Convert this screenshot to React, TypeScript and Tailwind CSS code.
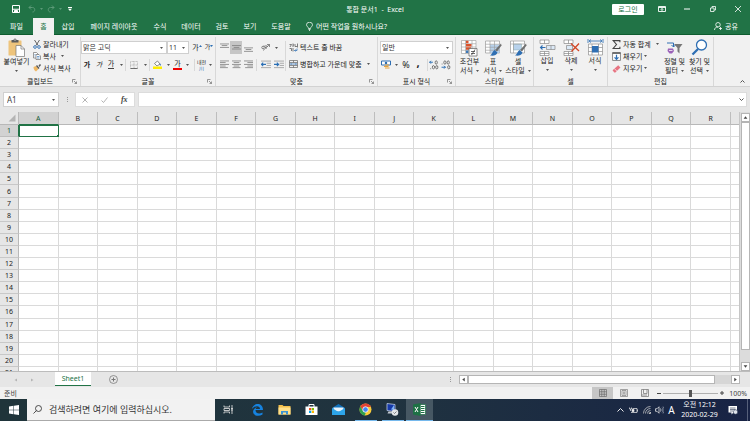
import type { ReactNode } from "react";

const columns = ["A", "B", "C", "D", "E", "F", "G", "H", "I", "J", "K", "L", "M", "N", "O", "P", "Q", "R"];
const rows = Array.from({ length: 21 }, (_, i) => i + 1);

const tabs = [
  { name: "파일", width: "w-[33px]" },
  { name: "홈", width: "w-[21px]" },
  { name: "삽입", width: "w-[28px]" },
  { name: "페이지 레이아웃", width: "w-[64px]" },
  { name: "수식", width: "w-[28px]" },
  { name: "데이터", width: "w-[34px]" },
  { name: "검토", width: "w-[28px]" },
  { name: "보기", width: "w-[28px]" },
  { name: "도움말", width: "w-[34px]" },
];

function Caret({ className = "text-[#555]" }: { className?: string }) {
  return (
    <svg viewBox="0 0 6 4" className={`w-[3px] h-[2px] shrink-0 ${className}`}>
      <path d="M0 0h6L3 4z" fill="currentColor" />
    </svg>
  );
}

function Group({ label, width, launcher, children }: { label: string; width: string; launcher?: boolean; children: ReactNode }) {
  return (
    <section aria-label={label} className={`${width} shrink-0 flex flex-col pt-0.5`}>
      <div className="flex-1 flex flex-col border-r border-[#d8d8d8]">
        <div className="flex-1">{children}</div>
        <div className="flex items-center h-[9px]">
          <span className="w-2" />
          <span className="flex-1 text-center">{label}</span>
          <span className="w-2">
            {launcher && (
              <button aria-label={`${label} 설정`} className="block">
                <svg viewBox="0 0 10 10" className="size-[5px]" fill="none" stroke="#777" strokeWidth="1.5">
                  <path d="M1 7V1h6M4 4l5 5M9 5v4H5" />
                </svg>
              </button>
            )}
          </span>
        </div>
      </div>
    </section>
  );
}

function Tool({ label, width = "w-3", active, children }: { label: string; width?: string; active?: boolean; children: ReactNode }) {
  return (
    <button
      aria-label={label}
      className={`${width} h-[13px] shrink-0 flex items-center justify-center ${active ? "bg-[#c6c6c6]" : ""}`}
    >
      {children}
    </button>
  );
}

function Drop({ label, width = "w-2" }: { label: string; width?: string }) {
  return (
    <button aria-label={`${label} 옵션`} className={`${width} h-[13px] shrink-0 flex items-center justify-center`}>
      <Caret />
    </button>
  );
}

function Sep() {
  return <span className="w-px h-3 bg-[#d8d8d8] shrink-0" />;
}

function Combo({ label, value, width }: { label: string; value: string; width: string }) {
  return (
    <div className={`relative ${width} shrink-0`}>
      <select
        aria-label={label}
        defaultValue={value}
        className="block w-full h-[13px] appearance-none bg-white ring-1 ring-inset ring-[#cfcfcf] pl-[2px] pr-2 leading-[13px] text-[#333] outline-none"
      >
        <option>{value}</option>
      </select>
      <span className="absolute right-1 inset-y-0 flex items-center pointer-events-none">
        <Caret />
      </span>
    </div>
  );
}

function BigButton({ lines, width, caretBelow, children }: { lines: string[]; width: string; caretBelow?: boolean; children: ReactNode }) {
  const last = lines.length - 1;
  return (
    <button className={`${width} shrink-0 flex flex-col items-center`}>
      {children}
      {lines.map((line, i) => (
        <span key={line} className="flex items-center gap-[3px] whitespace-nowrap">
          {line}
          {i === last && !caretBelow && <Caret />}
        </span>
      ))}
      {caretBelow && (
        <span className="h-[9px] flex items-center">
          <Caret />
        </span>
      )}
    </button>
  );
}

function RowButton({ text, caret, gap = "gap-[5px]", children }: { text: string; caret?: boolean; gap?: string; children: ReactNode }) {
  return (
    <button className={`flex items-center h-3 ${gap} whitespace-nowrap`}>
      <span className="flex items-center gap-[2px]">
        {children}
        {text}
      </span>
      {caret && <Caret />}
    </button>
  );
}

// horizontal text lines, given as [x, width] pairs
function Lines({ rows, top = 2 }: { rows: number[][]; top?: number }) {
  return (
    <svg viewBox="0 0 16 16" className="size-[9px]">
      {rows.map(([x, w], i) => (
        <rect key={i} x={x} y={top + i * 3} width={w} height="1.4" fill="#7d7d7d" />
      ))}
    </svg>
  );
}

function IndentIcon({ flip }: { flip?: boolean }) {
  return (
    <svg viewBox="0 0 16 14" className="w-[10px] h-[9px]">
      <path d="M0 1.5h16M9 5h7M9 8.5h7M0 12h16" stroke="#9a9a9a" strokeWidth="1.3" />
      <path d={flip ? "M0 6.8h7M4.5 4l3 2.8-3 2.8" : "M1 6.8h7M3.5 4l-3 2.8 3 2.8"} stroke="#2b6fb5" strokeWidth="1.8" fill="none" />
    </svg>
  );
}

function DecimalIcon({ up }: { up?: boolean }) {
  return (
    <svg viewBox="0 0 18 18" className="size-[10px]" fill="none">
      <path d={up ? "M7 4H1M3.5 1.5L1 4l2.5 2.5" : "M1 13h7M5.5 10.5L8 13l-2.5 2.5"} stroke="#2b6fb5" strokeWidth="1.8" />
      <g stroke="#555" strokeWidth="1.4">
        <ellipse cx="13" cy="4.5" rx="2" ry="3" />
        <ellipse cx="14" cy="13" rx="2" ry="3" />
        {up ? <ellipse cx="8" cy="13" rx="2" ry="3" /> : <ellipse cx="7" cy="4.5" rx="2" ry="3" />}
        <path d={up ? "M3 15v1.5" : "M2 6.5V8"} />
      </g>
    </svg>
  );
}

function PasteIcon() {
  return (
    <svg viewBox="0 0 34 38" className="w-[17px] h-[19px]">
      <rect x="1" y="5" width="26" height="30" rx="1" fill="#eec47c" />
      <path d="M7 9V4h4a3 3 0 016 0h4v5z" fill="#5d5d5d" />
      <circle cx="14" cy="4" r="1.3" fill="#f1f1f1" />
      <path d="M16 15h10l7 7v15H16z" fill="#fff" stroke="#777" strokeWidth="1.4" />
      <path d="M26 15v7h7" fill="none" stroke="#777" strokeWidth="1.4" />
    </svg>
  );
}

function CondIcon() {
  return (
    <svg viewBox="0 0 34 36" className="w-[17px] h-[18px]">
      <path d="M1 3h29v26H1zM1 9.5h29M1 16h29M1 22.5h29M9 3v26M22 3v26" fill="#fff" stroke="#999" strokeWidth="1.2" />
      <path d="M10 3.5h5v5h-5zM10 16.5h10v5H10z" fill="#d9532c" />
      <path d="M10 10h11v5H10z" fill="#d9532c" />
      <path d="M10 23h5v5h-5z" fill="#3c78b8" />
      <path d="M16 19h16v15H16z" fill="#fff" stroke="#666" strokeWidth="1.5" />
      <path d="M20 29h8M20 25h8M21 32l7-11" stroke="#444" strokeWidth="1.6" />
    </svg>
  );
}

function StyleIcon({ cell }: { cell?: boolean }) {
  return (
    <svg viewBox="0 0 34 36" className="w-[17px] h-[18px]">
      <path d="M1 4h28v24H1z" fill="#fff" stroke="#999" strokeWidth="1.4" />
      {cell ? (
        <path d="M7 10h16v12H7z" fill="#b8d2ec" stroke="#8aa" />
      ) : (
        <path d="M10 11h19v17H10z" fill="#b8d2ec" />
      )}
      <path d={cell ? "M1 10h28M7 4v24" : "M1 10.5h28M1 16.5h28M1 22.5h28M10 4v24M19 4v24"} stroke="#999" strokeWidth="1.2" fill="none" />
      <path d="M32 9l1 4-9 12-4-3z" fill="#707070" />
      <path d="M19 22l6 5c-2 6-8 7-15 6 4-2 4-7 9-11z" fill="#2f6fb3" />
    </svg>
  );
}

function CellsIcon({ kind }: { kind: "insert" | "delete" | "format" }) {
  return (
    <svg viewBox="0 0 34 34" className="w-[17px] h-[17px]" fill="none">
      {kind === "format" ? (
        <>
          <path d="M3 10h28v22H3zM3 17h28M3 25h28M10 10v22M23 10v22" fill="#fff" stroke="#888" strokeWidth="1.3" />
          <path d="M10 14h13v13H10z" fill="#2f6fb3" />
          <path d="M4 4h26M8 1L4 4l4 3M26 1l4 3-4 3M2 0v8M32 0v8" stroke="#2f6fb3" strokeWidth="1.6" />
        </>
      ) : (
        <>
          <path d="M2 2h18v7H2zM11 2v7M2 25h18v8H2zM11 25v8M2 29h18" fill="#fff" stroke="#888" strokeWidth="1.4" />
          {kind === "insert" ? (
            <>
              <path d="M15 13h17v8H15zM24 13v8" fill="#dce9f6" stroke="#888" strokeWidth="1.4" />
              <path d="M13 17H3M7 13l-4 4 4 4" stroke="#2f6fb3" strokeWidth="2.2" />
            </>
          ) : (
            <>
              <path d="M7 13h12v8H7z" fill="#dce9f6" stroke="#888" strokeWidth="1.4" />
              <path d="M16 9l16 15M32 9L17 25" stroke="#d24726" strokeWidth="2.6" />
            </>
          )}
        </>
      )}
    </svg>
  );
}

function TitleBar() {
  return (
    <header className="h-[18px] shrink-0 flex items-center text-white">
      <div className="flex-1 flex items-center">
        <button aria-label="저장" className="ml-3">
          <svg viewBox="0 0 16 16" className="size-2" fill="none" stroke="#fff" strokeWidth="2">
            <path d="M1 1h14v14H1zM1 8.5h14" />
            <path d="M5 11h6v4H5z" fill="#fff" />
          </svg>
        </button>
        <button aria-label="실행 취소" className="ml-2 flex items-center gap-1 text-[#5c9a78]">
          <svg viewBox="0 0 16 16" className="size-2" fill="none" stroke="currentColor" strokeWidth="2">
            <path d="M6 1L2 5l4 4M2 5h7c6 0 6 9 0 9" />
          </svg>
          <Caret className="text-[#5c9a78]" />
        </button>
        <button aria-label="다시 실행" className="ml-1 flex items-center gap-1 text-[#5c9a78]">
          <svg viewBox="0 0 16 16" className="size-2" fill="none" stroke="currentColor" strokeWidth="2">
            <path d="M10 1l4 4-4 4M14 5H7C1 5 1 14 7 14" />
          </svg>
          <Caret className="text-[#5c9a78]" />
        </button>
        <button aria-label="빠른 실행 도구" className="ml-1.5">
          <svg viewBox="0 0 8 8" className="size-1" fill="#fff">
            <path d="M0 0h8v2H0zM0 3.5h8L4 8z" />
          </svg>
        </button>
      </div>
      <h1 className="whitespace-pre">통합 문서1  -  Excel</h1>
      <div className="flex-1 flex items-center justify-end">
        <button className="w-8 h-[11px] bg-white text-[#217346] rounded-[1px] mr-[14px]">로그인</button>
        <button aria-label="리본 표시" className="mr-[18px]">
          <svg viewBox="0 0 16 12" className="w-2 h-1.5" fill="none" stroke="#fff" strokeWidth="1.8">
            <path d="M1 1h14v10H1zM1 3h14M8 10V5M5.5 7.5L8 5l2.5 2.5" />
          </svg>
        </button>
        <button aria-label="최소화" className="mr-5">
          <svg viewBox="0 0 12 12" className="size-1.5" stroke="#fff" strokeWidth="2">
            <path d="M0 6h12" />
          </svg>
        </button>
        <button aria-label="이전 크기로" className="mr-[19px]">
          <svg viewBox="0 0 12 12" className="size-1.5" fill="none" stroke="#fff" strokeWidth="1.6">
            <path d="M1 4h7v7H1zM4 4V1h7v7H8" />
          </svg>
        </button>
        <button aria-label="닫기" className="mr-[9px]">
          <svg viewBox="0 0 12 12" className="size-1.5" stroke="#fff" strokeWidth="1.6">
            <path d="M0 0l12 12M12 0L0 12" />
          </svg>
        </button>
      </div>
    </header>
  );
}

function RibbonTabs() {
  return (
    <nav className="h-[17px] shrink-0 flex items-stretch text-white border-b border-[#0e5c2f]">
      {tabs.map((tab) => (
        <button
          key={tab.name}
          className={`${tab.width} shrink-0 whitespace-nowrap text-center ${tab.name === "홈" ? "bg-[#f1f1f1] text-[#217346] -mb-px" : ""}`}
        >
          {tab.name}
        </button>
      ))}
      <button className="ml-2 flex items-center gap-[3px] whitespace-nowrap">
        <svg viewBox="0 0 14 18" className="w-[7px] h-[9px]" fill="none" stroke="#fff" strokeWidth="1.5">
          <path d="M5 13c0-3-4-4-4-7.5a6 5 0 0112 0C13 9 9 10 9 13zM5 15h4M6 17h2" />
        </svg>
        어떤 작업을 원하시나요?
      </button>
      <button className="ml-auto mr-3 flex items-center gap-[3px]">
        <svg viewBox="0 0 16 16" className="size-2" fill="none" stroke="#fff" strokeWidth="1.6">
          <circle cx="8" cy="5.5" r="4.5" />
          <path d="M1 16c0-4 3-6 7-6M13 10v6M10 13h6" />
        </svg>
        공유
      </button>
    </nav>
  );
}

function Ribbon() {
  return (
    <div className="h-[51px] shrink-0 flex bg-[#f1f1f1] text-[#222]">
      <Group label="클립보드" width="w-[81px]" launcher>
        <div className="flex pt-px">
          <BigButton lines={["붙여넣기"]} width="w-[33px]" caretBelow>
            <PasteIcon />
          </BigButton>
          <div className="flex flex-col">
            <RowButton text="잘라내기">
              <svg viewBox="0 0 16 18" className="w-2 h-[9px]" fill="none">
                <path d="M3 0l7 11M13 0L6 11" stroke="#555" strokeWidth="1.8" />
                <circle cx="4" cy="14" r="2.7" stroke="#2f6fb3" strokeWidth="1.8" />
                <circle cx="12" cy="14" r="2.7" stroke="#2f6fb3" strokeWidth="1.8" />
              </svg>
            </RowButton>
            <RowButton text="복사" caret>
              <svg viewBox="0 0 16 16" className="size-2" fill="#fff" stroke="#666" strokeWidth="1.3">
                <path d="M1 1h6l3 3v8H1z" />
                <path d="M6 5h6l3 3v7H6z" />
                <path d="M8 9h5M8 12h5M3 5h2M3 8h2" stroke="#2f6fb3" />
              </svg>
            </RowButton>
            <RowButton text="서식 복사">
              <svg viewBox="0 0 16 16" className="size-2">
                <path d="M1 6l5-2 5 6-5 5c-3-2-5-5-5-9z" fill="#eeb765" />
                <path d="M6 4l2-2 5 6-2 2zM11 3l3-3 2 2-3 4z" fill="#555" />
              </svg>
            </RowButton>
          </div>
        </div>
      </Group>

      <Group label="글꼴" width="w-[135px]" launcher>
        <div className="flex items-center pt-1">
          <Combo label="글꼴" value="맑은 고딕" width="w-[86px]" />
          <Combo label="글꼴 크기" value="11" width="w-[22px]" />
          <span className="w-[2px]" />
          <Tool label="글꼴 크게" width="w-3">
            <span>가</span>
            <svg viewBox="0 0 6 4" className="w-[3px] h-[2px] mb-1"><path d="M0 4h6L3 0z" fill="#2f6fb3" /></svg>
          </Tool>
          <Tool label="글꼴 작게" width="w-3">
            <span className="text-[6px]">가</span>
            <svg viewBox="0 0 6 4" className="w-[3px] h-[2px] mb-1"><path d="M0 0h6L3 4z" fill="#2f6fb3" /></svg>
          </Tool>
        </div>
        <div className="flex items-center pt-1">
          <Tool label="굵게"><b>가</b></Tool>
          <Tool label="기울임꼴"><i>가</i></Tool>
          <Tool label="밑줄"><span className="border-b border-[#444] leading-2">가</span></Tool>
          <Drop label="밑줄" />
          <Sep />
          <Tool label="테두리" width="w-[15px]">
            <svg viewBox="0 0 16 16" className="size-2" fill="none" stroke="#999" strokeWidth="1.4">
              <path d="M1 1h14v14H1zM8 1v14M1 8h14" strokeDasharray="1.5 1.3" />
              <path d="M1 15h14" stroke="#444" />
            </svg>
          </Tool>
          <Drop label="테두리" />
          <Sep />
          <Tool label="채우기 색" width="w-[14px]">
            <svg viewBox="0 0 18 18" className="size-[9px]">
              <path d="M3 7l6-5 5 6-6 4z" fill="#fff" stroke="#666" strokeWidth="1.5" />
              <path d="M14 7c2 2 3 4 1 4s-2-2-1-4z" fill="#2f6fb3" />
              <path d="M0 13h18v5H0z" fill="#ffed00" />
            </svg>
          </Tool>
          <Drop label="채우기 색" />
          <Tool label="글꼴 색" width="w-[11px]">
            <span className="w-[9px] border-b-2 border-[#f00000] leading-2 text-center">가</span>
          </Tool>
          <Drop label="글꼴 색" />
          <span className="w-[3px]" />
          <Sep />
          <Tool label="윗주" width="w-[13px]">
            <span className="text-[5px] leading-[6px]">
              내천
              <br />
              <span className="text-[#2f6fb3]">川</span>
            </span>
          </Tool>
          <Drop label="윗주" width="w-[5px]" />
        </div>
      </Group>

      <Group label="맞춤" width="w-[162px]" launcher>
        <div className="flex pt-1 pl-px">
          <div className="flex flex-col gap-1 pl-px">
            <div className="flex items-center">
              <Tool label="위쪽 맞춤"><Lines rows={[[0, 16], [3, 10], [0, 16]]} top={1} /></Tool>
              <Tool label="가운데 맞춤" active><Lines rows={[[0, 16], [3, 10], [0, 16]]} top={4} /></Tool>
              <Tool label="아래쪽 맞춤"><Lines rows={[[0, 16], [3, 10], [0, 16]]} top={8} /></Tool>
              <span className="w-[5px]" />
              <Tool label="방향" width="w-[13px]">
                <svg viewBox="0 0 20 18" className="w-[10px] h-[9px]" fill="none" stroke="#666" strokeWidth="1.5">
                  <path d="M4 15L17 3M17 8V3h-5" />
                  <circle cx="4" cy="9" r="2.5" />
                  <path d="M6 5l5 6M9 4l4 4" stroke="#444" />
                </svg>
              </Tool>
              <Drop label="방향" />
            </div>
            <div className="flex items-center">
              <Tool label="왼쪽"><Lines rows={[[0, 16], [0, 10], [0, 16], [0, 10], [0, 14]]} top={1} /></Tool>
              <Tool label="가운데"><Lines rows={[[0, 16], [3, 10], [0, 16], [3, 10], [1, 14]]} top={1} /></Tool>
              <Tool label="오른쪽"><Lines rows={[[0, 16], [6, 10], [0, 16], [6, 10], [2, 14]]} top={1} /></Tool>
              <span className="w-0.5" />
              <Sep />
              <span className="w-0.5" />
              <Tool label="내어쓰기" width="w-[13px]"><IndentIcon /></Tool>
              <Tool label="들여쓰기" width="w-[13px]"><IndentIcon flip /></Tool>
            </div>
          </div>
          <span className="w-px bg-[#d8d8d8]" />
          <div className="flex flex-col gap-[5px] pl-[3px]">
            <RowButton text="텍스트 줄 바꿈">
              <svg viewBox="0 0 18 18" className="size-[9px]" fill="none" stroke="#555" strokeWidth="1.5">
                <path d="M1 3h4l-3 5M8 1v7M8 4h2M12 2v5h4M17 1v8M1 11h4v5M8 10v7" />
                <path d="M16 11v4h-5M13 13l-2 2 2 2" stroke="#2f6fb3" />
              </svg>
            </RowButton>
            <RowButton text="병합하고 가운데 맞춤" caret>
              <svg viewBox="0 0 18 16" className="w-[9px] h-2" fill="none" stroke="#666" strokeWidth="1.4">
                <path d="M1 1h16v14H1zM1 5h16M1 11h16M9 1v4M9 11v4" />
                <path d="M3 8h12M5 6L3 8l2 2M13 6l2 2-2 2" stroke="#2f6fb3" />
              </svg>
            </RowButton>
          </div>
        </div>
      </Group>

      <Group label="표시 형식" width="w-[78px]" launcher>
        <div className="flex pt-1 pl-[2px]">
          <Combo label="표시 형식" value="일반" width="w-[73px]" />
        </div>
        <div className="flex items-center pt-1 pl-[2px]">
          <Tool label="회계 표시 형식">
            <svg viewBox="0 0 20 18" className="w-[10px] h-[9px]">
              <path d="M1 2h18v8H1z" fill="#fff" stroke="#2f6fb3" strokeWidth="2" />
              <circle cx="10" cy="6" r="2.5" fill="#2f6fb3" />
              <path d="M8 9h8v2H8zM6 12h9v2H6zM8 15h9v2H8z" fill="#e8a33d" />
            </svg>
          </Tool>
          <Drop label="회계" />
          <Tool label="백분율"><span className="text-[9px]">%</span></Tool>
          <Tool label="쉼표"><b className="text-[11px] leading-2 pb-1">,</b></Tool>
          <span className="w-[3px]" />
          <Sep />
          <Tool label="자릿수 늘림"><DecimalIcon up /></Tool>
          <Tool label="자릿수 줄임"><DecimalIcon /></Tool>
        </div>
      </Group>

      <Group label="스타일" width="w-[78px]">
        <div className="flex pt-[2px] pl-px">
          <BigButton lines={["조건부", "서식"]} width="w-[25px]"><CondIcon /></BigButton>
          <BigButton lines={["표", "서식"]} width="w-[22px]"><StyleIcon /></BigButton>
          <BigButton lines={["셀", "스타일"]} width="w-[28px]"><StyleIcon cell /></BigButton>
        </div>
      </Group>

      <Group label="셀" width="w-[74px]">
        <div className="flex pt-[2px] pl-px">
          <BigButton lines={["삽입"]} width="w-6" caretBelow><CellsIcon kind="insert" /></BigButton>
          <BigButton lines={["삭제"]} width="w-6" caretBelow><CellsIcon kind="delete" /></BigButton>
          <BigButton lines={["서식"]} width="w-6" caretBelow><CellsIcon kind="format" /></BigButton>
        </div>
      </Group>

      <Group label="편집" width="w-[106px]">
        <div className="flex pt-px pl-1">
          <div className="w-[50px] flex flex-col">
            <RowButton text="자동 합계" caret>
              <svg viewBox="0 0 16 16" className="size-[9px]" fill="none" stroke="#444" strokeWidth="2">
                <path d="M14 4V1H2l6 7-6 7h12v-3" />
              </svg>
            </RowButton>
            <RowButton text="채우기" caret gap="gap-[2px]">
              <svg viewBox="0 0 16 16" className="size-[9px]" fill="none">
                <path d="M1 1h14v14H1z" fill="#fff" stroke="#777" strokeWidth="1.5" />
                <path d="M1 2h14" stroke="#555" strokeWidth="2.5" />
                <path d="M8 5v8M4.5 9.5L8 13l3.5-3.5" stroke="#2f6fb3" strokeWidth="2.2" />
              </svg>
            </RowButton>
            <RowButton text="지우기" caret gap="gap-[2px]">
              <svg viewBox="0 0 16 16" className="size-[9px]">
                <path d="M1 11L11 2l4 4-9 9H4z" fill="#e77482" />
                <path d="M4 8l5 5" stroke="#fff" strokeWidth="1.2" />
              </svg>
            </RowButton>
          </div>
          <div className="flex pt-px">
            <BigButton lines={["정렬 및", "필터"]} width="w-[25px]">
              <svg viewBox="0 0 34 36" className="w-[17px] h-[18px]" fill="none">
                <path d="M2 8h13v8M11 12l4 4 4-4" stroke="#2f6fb3" strokeWidth="2" />
                <path d="M16 10h17l-6 8v11l-4-4v-7z" fill="#777" />
                <path d="M4 19h10l2 5-4 5H7l-4-5z" fill="#9b62b8" />
                <path d="M6 23h7" stroke="#fff" strokeWidth="1.5" />
              </svg>
            </BigButton>
            <BigButton lines={["찾기 및", "선택"]} width="w-[25px]">
              <svg viewBox="0 0 34 36" className="w-[17px] h-[18px]" fill="none">
                <circle cx="21" cy="12" r="10" fill="#fff" stroke="#2f6fb3" strokeWidth="2.6" />
                <path d="M14 20L3 31" stroke="#2f6fb3" strokeWidth="4.5" />
              </svg>
            </BigButton>
          </div>
        </div>
      </Group>
      <button aria-label="리본 축소" className="ml-auto self-end mr-[5px] mb-[3px]">
        <svg viewBox="0 0 10 6" className="w-[5px] h-[3px]" fill="none" stroke="#555" strokeWidth="2">
          <path d="M1 5l4-4 4 4" />
        </svg>
      </button>
    </div>
  );
}

function FormulaBar() {
  return (
    <div className="h-[26px] shrink-0 flex items-center bg-[#e6e6e6] border-t border-[#d2d2d2] px-[3px] text-[#444]">
      <div className="relative w-14 shrink-0">
        <input aria-label="이름 상자" defaultValue="A1" className="block w-full h-[15px] bg-white border border-[#d0d0d0] pl-[3px] text-[8px] outline-none" />
        <span className="absolute right-1 inset-y-0 flex items-center"><Caret /></span>
      </div>
      <span className="w-4 flex flex-col items-center gap-px">
        <i className="size-px bg-[#999]" />
        <i className="size-px bg-[#999]" />
        <i className="size-px bg-[#999]" />
      </span>
      <div className="w-[60px] h-[15px] shrink-0 flex items-center justify-around bg-white border border-[#dcdcdc]">
        <button aria-label="취소">
          <svg viewBox="0 0 12 12" className="size-1.5" stroke="#aaa" strokeWidth="1.8"><path d="M1 1l10 10M11 1L1 11" /></svg>
        </button>
        <button aria-label="입력">
          <svg viewBox="0 0 14 12" className="w-[7px] h-[6px]" fill="none" stroke="#aaa" strokeWidth="1.8"><path d="M1 7l4 4 8-10" /></svg>
        </button>
        <button aria-label="함수 삽입" className="font-['Liberation_Serif',serif] italic font-bold text-[8px]">fx</button>
      </div>
      <div className="relative flex-1 ml-[3px]">
        <input aria-label="수식 입력줄" className="block w-full h-[15px] bg-white border border-[#dcdcdc] px-1 outline-none" />
        <svg viewBox="0 0 10 6" className="absolute right-[3px] top-[6px] w-[5px] h-[3px]" fill="none" stroke="#555" strokeWidth="2">
          <path d="M1 1l4 4 4-4" />
        </svg>
      </div>
    </div>
  );
}

function Arrow({ dir }: { dir: "up" | "down" | "left" | "right" }) {
  const paths = { up: "M1 6h6L4 2z", down: "M1 2h6L4 6z", left: "M6 1v6L2 4z", right: "M2 1v6l4-3z" };
  return (
    <button aria-label={dir} className="size-[9px] shrink-0 bg-white border border-[#b5b5b5] flex items-center justify-center">
      <svg viewBox="0 0 8 8" className="size-[5px]"><path d={paths[dir]} fill="#444" /></svg>
    </button>
  );
}

function Sheet() {
  return (
    <main className="flex-1 min-h-0 flex bg-[#e6e6e6]">
      <div className="flex-1 min-w-0 overflow-hidden">
        <table className="w-full h-[267px] table-fixed border-separate border-spacing-0 bg-white text-center text-[#222]">
          <colgroup>
            <col className="w-[19px]" />
            {columns.map((c) => <col key={c} />)}
            <col className="w-2" />
          </colgroup>
          <thead>
            <tr className="h-[13px] bg-[#e6e6e6]">
              <th className="p-0 border-r border-b border-[#b8b8b8]">
                <svg viewBox="0 0 16 16" className="size-2 ml-auto mr-0.5"><path d="M15 1v14H1z" fill="#b4b4b4" /></svg>
              </th>
              {columns.map((c) => (
                <th
                  key={c}
                  className={`p-0 font-normal border-r border-r-[#bdbdbd] border-b ${c === "A" ? "bg-[#d2d2d2] border-b-[#217346] text-[#185c37]" : "border-b-[#b8b8b8]"}`}
                >
                  {c}
                </th>
              ))}
              <th className="p-0 border-b border-[#b8b8b8]" />
            </tr>
          </thead>
          <tbody>
            {rows.map((r) => (
              <tr key={r}>
                <th
                  className={`p-0 font-normal border-b border-r ${r === 1 ? "bg-[#d2d2d2] border-b-[#bdbdbd] border-r-[#217346] text-[#185c37]" : "bg-[#e6e6e6] border-b-[#c8c8c8] border-r-[#b8b8b8]"}`}
                >
                  {r}
                </th>
                {columns.map((c) =>
                  c === "A" && r === 1 ? (
                    <td key={c} className="relative p-0 border-b border-r border-[#217346] outline outline-[#217346] -outline-offset-1">
                      <span className="absolute -right-px -bottom-px size-[2px] bg-[#217346]" />
                    </td>
                  ) : (
                    <td key={c} className="p-0 border-b border-r border-[#dadada]" />
                  ),
                )}
                <td className="p-0 border-b border-[#dadada]" />
              </tr>
            ))}
          </tbody>
        </table>
      </div>
      <div className="w-[11px] shrink-0 flex flex-col items-center border-l border-[#c6c6c6] bg-[#dcdcdc] pt-px">
        <Arrow dir="up" />
        <div className="w-[9px] flex-1 bg-white border border-[#b5b5b5] mb-3" />
        <Arrow dir="down" />
      </div>
    </main>
  );
}

function SheetTabs() {
  return (
    <div className="h-4 shrink-0 flex bg-[#e6e6e6] border-t border-[#bcbcbc] text-[#bbb]">
      <div className="w-[55px] shrink-0 flex items-center pl-[14px] gap-3">
        <button aria-label="이전 시트"><svg viewBox="0 0 8 8" className="size-1"><path d="M6 1v6L1 4z" fill="#b5b5b5" /></svg></button>
        <button aria-label="다음 시트"><svg viewBox="0 0 8 8" className="size-1"><path d="M2 1v6l5-3z" fill="#b5b5b5" /></svg></button>
      </div>
      <button className="w-9 h-[14px] shrink-0 bg-white border-b border-[#217346] text-[#217346]">Sheet1</button>
      <button aria-label="새 시트" className="ml-[18px]">
        <svg viewBox="0 0 18 18" className="size-[9px]" fill="none" stroke="#777" strokeWidth="1.5">
          <circle cx="9" cy="9" r="8" />
          <path d="M9 5v8M5 9h8" strokeWidth="2" />
        </svg>
      </button>
      <div className="ml-auto w-[300px] flex items-center pr-2.5">
        <span className="w-[9px] flex flex-col gap-px">
          <i className="size-px bg-[#999]" />
          <i className="size-px bg-[#999]" />
          <i className="size-px bg-[#999]" />
        </span>
        <Arrow dir="left" />
        <div className="flex-1 h-[9px] bg-[#d6d6d6] pr-4">
          <div className="h-full bg-white border border-[#b5b5b5]" />
        </div>
        <Arrow dir="right" />
      </div>
    </div>
  );
}

function StatusBar() {
  return (
    <footer className="h-3 shrink-0 flex items-center bg-[#f1f1f1] text-[#444] pl-1 pr-[3px]">
      <span>준비</span>
      <div className="ml-auto flex h-full items-center">
        <button aria-label="기본" className="w-[21px] h-full bg-[#c6c6c6] flex items-center justify-center">
          <svg viewBox="0 0 16 16" className="size-2" fill="none" stroke="#666" strokeWidth="1.3"><path d="M1 1h14v14H1zM1 5.5h14M1 10.5h14M5.5 1v14M10.5 1v14" /></svg>
        </button>
        <button aria-label="페이지 레이아웃" className="w-[21px] flex justify-center">
          <svg viewBox="0 0 16 16" className="size-2" fill="none" stroke="#777" strokeWidth="1.3"><path d="M1 1h14v14H1zM4 3h8v10H4zM6 6h4M6 8h4M6 10h4" /></svg>
        </button>
        <button aria-label="페이지 나누기" className="w-[21px] flex justify-center">
          <svg viewBox="0 0 16 16" className="size-2" fill="none" stroke="#777" strokeWidth="1.5"><path d="M1 1h14v14H1zM5 1v8h7V1M1 12h11" /></svg>
        </button>
        <button aria-label="축소" className="w-2 flex justify-center"><i className="w-1 h-px bg-[#444]" /></button>
        <input
          type="range"
          aria-label="확대/축소"
          defaultValue={50}
          className="w-[55px] h-2 appearance-none bg-transparent [&::-webkit-slider-runnable-track]:h-px [&::-webkit-slider-runnable-track]:bg-[#b0b0b0] [&::-webkit-slider-thumb]:appearance-none [&::-webkit-slider-thumb]:w-[3px] [&::-webkit-slider-thumb]:h-[7px] [&::-webkit-slider-thumb]:-mt-[3px] [&::-webkit-slider-thumb]:bg-[#555]"
        />
        <button aria-label="확대" className="w-2 flex justify-center">
          <svg viewBox="0 0 8 8" className="size-1" stroke="#444" strokeWidth="2"><path d="M4 0v8M0 4h8" /></svg>
        </button>
        <span className="w-[21px] text-right">100%</span>
      </div>
    </footer>
  );
}

function TaskApp({ label, state, children }: { label: string; state?: "open" | "active"; children: ReactNode }) {
  return (
    <button aria-label={label} className={`w-[27px] shrink-0 flex flex-col items-center ${state === "active" ? "bg-[#465763]" : ""}`}>
      <span className="flex-1 flex items-center">
        <svg viewBox="0 0 26 26" className="size-[13px]" fill="none">{children}</svg>
      </span>
      <span className={`h-px ${state === "active" ? "w-full bg-[#76b9ed]" : state === "open" ? "w-[22px] bg-[#76b9ed]" : "w-0"}`} />
    </button>
  );
}

function TaskBar() {
  return (
    <div className="h-[22px] shrink-0 flex bg-linear-to-r from-[#1f343a] via-[#20333f] to-[#182345] text-white">
      <button aria-label="시작" className="w-[27px] shrink-0 flex items-center justify-center">
        <svg viewBox="0 0 20 20" className="size-[10px]" fill="#fff">
          <path d="M0 3l9-1.5V9.500H0zM10 1.300L20 0v9.500H10zM0 10.500h9v8L0 17zM10 10.500h10V20l-10-1.500z" />
        </svg>
      </button>
      <label className="w-[188px] shrink-0 flex items-center bg-[#f2f2f2] border-b border-[#aaa] pl-[6px] gap-[7px]">
        <svg viewBox="0 0 18 18" className="size-[9px]" fill="none" stroke="#333" strokeWidth="1.7">
          <circle cx="11" cy="7" r="6" />
          <path d="M7 11l-6 6" />
        </svg>
        <input
          aria-label="검색"
          placeholder="검색하려면 여기에 입력하십시오."
          className="flex-1 min-w-0 h-4 bg-transparent text-[9px] placeholder:text-[#333] outline-none"
        />
      </label>
      <div className="flex">
        <TaskApp label="작업 보기">
          <path d="M4 5v3h11V5M4 21v-3h11v3M4 11h11v4H4zM20 4v18M18 11h4M18 14h4" stroke="#ddd" strokeWidth="1.7" />
        </TaskApp>
        <span className="w-[2px]" />
        <TaskApp label="Edge">
          <path d="M2 12C4-1 24-2 24 14H9c0 8 9 8 14 5v4C12 29 1 23 5 14c2-4 5-5 7-5-2 1-3 2-3 3h9c0-8-11-7-16 0z" fill="#1683e0" />
        </TaskApp>
        <TaskApp label="파일 탐색기">
          <path d="M1 4h8l2 2h14v17H1z" fill="#f3c04d" />
          <path d="M1 9h24v14H1z" fill="#ffe08a" />
          <path d="M6 23v-7h14v7h-4v-4h-6v4z" fill="#3c93d3" />
        </TaskApp>
        <TaskApp label="Store">
          <path d="M8 8V3h10v5" stroke="#fff" strokeWidth="2" />
          <path d="M1 7h24v17H1z" fill="#fff" />
          <path d="M8 10h4.500v4.500H8z" fill="#f25022" />
          <path d="M13.500 10H18v4.500h-4.500z" fill="#7fba00" />
          <path d="M8 15.500h4.500V20H8z" fill="#00a4ef" />
          <path d="M13.500 15.500H18V20h-4.500z" fill="#ffb900" />
        </TaskApp>
        <TaskApp label="메일">
          <path d="M0 10L13 2l13 8v14H0z" fill="#1272bd" />
          <path d="M3 9h20v8H3z" fill="#e9f4fc" />
          <path d="M0 10l13 8 13-8v14H0z" fill="#2da5ea" />
        </TaskApp>
        <TaskApp label="Chrome" state="open">
          <circle cx="13" cy="13" r="12" fill="#f9cc3a" />
          <path d="M2.600 7A12 12 0 0124 8H13l-5 8z" fill="#e14335" />
          <path d="M2.600 7l6 10 5 2-2 6A12 12 0 012.600 7z" fill="#2ea04f" />
          <circle cx="13" cy="13" r="5.500" fill="#4285f4" stroke="#fff" strokeWidth="1.6" />
        </TaskApp>
        <TaskApp label="원격 데스크톱" state="open">
          <path d="M2 1l16 2v14L2 15z" fill="#1539a8" stroke="#c8d6e8" strokeWidth="1.5" />
          <path d="M10 13l6-9v10z" fill="#7fb4f5" />
          <path d="M5 17h12v4H3z" fill="#c5cbd2" />
          <circle cx="18" cy="19" r="6.500" fill="#e3e6e9" />
          <path d="M15 19l2 2 4-4" stroke="#555" strokeWidth="1.5" />
        </TaskApp>
        <TaskApp label="Excel" state="active">
          <path d="M14 3h11v20H14z" fill="#fff" stroke="#1e7145" strokeWidth="1.5" />
          <path d="M16 7h7M16 11h7M16 15h7M16 19h7" stroke="#1e7145" strokeWidth="2" />
          <path d="M0 3l15-3v26L0 23z" fill="#1e7145" />
          <path d="M4 8l6 10M10 8L4 18" stroke="#fff" strokeWidth="2" />
        </TaskApp>
      </div>
      <div className="ml-auto flex items-center">
        <button aria-label="숨겨진 아이콘" className="w-[13px] flex justify-center">
          <svg viewBox="0 0 14 8" className="w-[7px] h-1" fill="none" stroke="#eee" strokeWidth="2"><path d="M1 7l6-6 6 6" /></svg>
        </button>
        <button aria-label="배터리" className="w-[13px] flex justify-center">
          <svg viewBox="0 0 18 14" className="w-[9px] h-[7px]" fill="none" stroke="#eee" strokeWidth="1.4">
            <path d="M7 3h9v8H4M17 5v4M1 1v3h4V1M3 4v4" />
            <path d="M6 5h4v4H6z" fill="#eee" />
          </svg>
        </button>
        <button aria-label="네트워크" className="w-[13px] flex justify-center">
          <svg viewBox="0 0 16 16" className="size-2" fill="none" stroke="#ccc" strokeWidth="1.5">
            <path d="M1 15A14 14 0 0115 1M5 15A10 10 0 0115 5M9 15a6 6 0 016-6" />
            <path d="M12 15l3-3v3z" fill="#fff" />
          </svg>
        </button>
        <button aria-label="볼륨" className="w-3 flex justify-center">
          <svg viewBox="0 0 18 16" className="w-[9px] h-2" fill="none" stroke="#eee" strokeWidth="1.5">
            <path d="M1 5.500h3l4-4v13l-4-4H1zM11 5c1 2 1 4 0 6" />
            <path d="M14 3c2 3 2 7 0 10M16 1c3 4 3 10 0 14" stroke="#8a94a5" />
          </svg>
        </button>
        <button aria-label="입력기" className="w-[13px] text-[10px]">A</button>
        <button className="w-[43px] leading-[10px] text-center whitespace-nowrap">
          오전 12:12
          <br />
          2020-02-29
        </button>
        <button aria-label="알림" className="w-[26px] pr-[3px] flex justify-center">
          <svg viewBox="0 0 20 20" className="size-[10px]" fill="none">
            <path d="M1 2h17v13h-7l-4 4v-4H1z" fill="#fff" />
            <path d="M4 6h11M4 9h11M4 12h6" stroke="#1b2947" strokeWidth="1.2" />
            <circle cx="15" cy="14" r="4.500" fill="#dfe3ea" stroke="#1b2947" />
          </svg>
        </button>
        <span className="w-[3px] h-[22px] border-l border-[#56607a]" />
      </div>
    </div>
  );
}

export default function App() {
  return (
    <div className="h-screen flex flex-col overflow-hidden bg-[#217346] font-['Noto_Sans','Noto_Sans_CJK_KR',sans-serif] text-[7px] leading-[9px]">
      <TitleBar />
      <RibbonTabs />
      <Ribbon />
      <FormulaBar />
      <Sheet />
      <SheetTabs />
      <StatusBar />
      <TaskBar />
    </div>
  );
}
